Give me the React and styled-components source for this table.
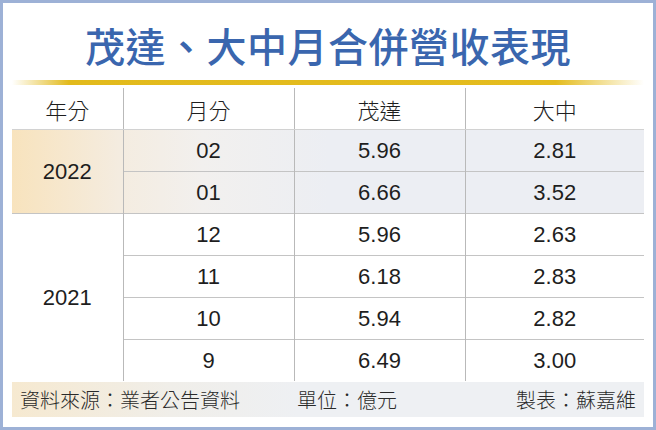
import styled, { createGlobalStyle } from 'styled-components'

const GlobalStyle = createGlobalStyle`
  html, body {
    margin: 0;
    padding: 0;
    background: #fff;
  }
  body {
    font-family: "Liberation Sans", "Noto Sans CJK TC", sans-serif;
  }
`

const Frame = styled.div`
  box-sizing: border-box;
  width: 656px;
  height: 430px;
  border: 3px solid #9db1d6;
  background: #fff;
  display: flex;
  flex-direction: column;
`

const Title = styled.h1`
  margin: 18px 0 0;
  height: 48px;
  line-height: 48px;
  text-align: center;
  font-family: "Noto Sans CJK TC", sans-serif;
  font-size: 40px;
  font-weight: 500;
  color: #3a66ae;
  letter-spacing: 0.5px;
`

const GoldRule = styled.div`
  margin: 11px 9px 0;
  height: 5px;
  background: linear-gradient(
    to right,
    rgba(226, 186, 26, 0) 0%,
    #e2ba1c 9%,
    #e4bc1e 86%,
    rgba(226, 186, 26, 0) 100%
  );
`

const Table = styled.table`
  margin: 3px 9px 0;
  width: 632px;
  border-collapse: collapse;
  table-layout: fixed;
`

const Head = styled.th`
  height: 41px;
  padding: 0;
  font-family: "Noto Sans CJK TC", sans-serif;
  font-size: 22px;
  font-weight: 300;
  color: #1e1e1e;
  text-align: center;
  border-bottom: 1px solid #d2d2d2;
  & + & {
    border-left: 1px solid #b9b9b9;
  }
`

const Group = styled.tbody`
  background: ${(p) =>
    p.$tint
      ? 'linear-gradient(to right, #f8e3bd 0%, #f4ece0 17%, #f2f0ee 30%, #eceef3 50%, #eceef3 100%)'
      : '#fff'};
  & + & {
    border-top: 1px solid #c4c4c4;
  }
`

const Row = styled.tr`
  & + & td:not([rowspan]) {
    border-top: 1px solid #c4c4c4;
  }
`

const Cell = styled.td`
  height: 41px;
  padding: 0;
  text-align: center;
  font-size: 22px;
  color: #1e1e1e;
  border-left: 1px solid #b9b9b9;
  &[rowspan] {
    border-left: none;
  }
`

const Footer = styled.div`
  margin: 1px 9px 0;
  height: 35px;
  padding: 0 8px;
  display: grid;
  grid-template-columns: 277px 1fr auto;
  align-items: center;
  font-family: "Noto Sans CJK TC", sans-serif;
  font-size: 20px;
  font-weight: 300;
  color: #2a2a2a;
  background: linear-gradient(to right, #f6e9d0 0%, #f0eee9 25%, #eef0f3 45%, #eef0f3 100%);
`

const groups = [
  {
    year: '2022',
    tint: true,
    rows: [
      ['02', '5.96', '2.81'],
      ['01', '6.66', '3.52'],
    ],
  },
  {
    year: '2021',
    tint: false,
    rows: [
      ['12', '5.96', '2.63'],
      ['11', '6.18', '2.83'],
      ['10', '5.94', '2.82'],
      ['9', '6.49', '3.00'],
    ],
  },
]

const App = () => (
  <>
    <GlobalStyle />
    <Frame>
      <Title>茂達、大中月合併營收表現</Title>
      <GoldRule />
      <Table>
        <colgroup>
          <col style={{ width: 111 }} />
          <col style={{ width: 171 }} />
          <col style={{ width: 171 }} />
          <col style={{ width: 179 }} />
        </colgroup>
        <thead>
          <tr>
            <Head>年分</Head>
            <Head>月分</Head>
            <Head>茂達</Head>
            <Head>大中</Head>
          </tr>
        </thead>
        {groups.map((g) => (
          <Group key={g.year} $tint={g.tint}>
            {g.rows.map((r, i) => (
              <Row key={r[0]}>
                {i === 0 && <Cell rowSpan={g.rows.length}>{g.year}</Cell>}
                {r.map((v, j) => (
                  <Cell key={j}>{v}</Cell>
                ))}
              </Row>
            ))}
          </Group>
        ))}
      </Table>
      <Footer>
        <span>資料來源：業者公告資料</span>
        <span>單位：億元</span>
        <span>製表：蘇嘉維</span>
      </Footer>
    </Frame>
  </>
)

export default App
